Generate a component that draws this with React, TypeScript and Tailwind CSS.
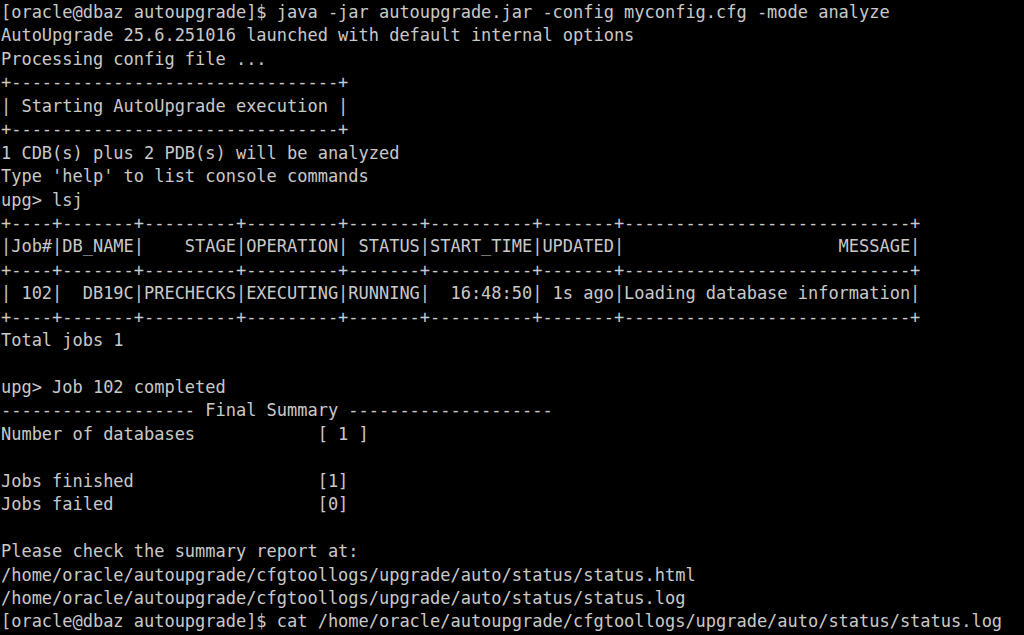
import React from 'react'

const lines: string[] = [
    '[oracle@dbaz autoupgrade]$ java -jar autoupgrade.jar -config myconfig.cfg -mode analyze',
    'AutoUpgrade 25.6.251016 launched with default internal options',
    'Processing config file ...',
    '+--------------------------------+',
    '| Starting AutoUpgrade execution |',
    '+--------------------------------+',
    '1 CDB(s) plus 2 PDB(s) will be analyzed',
    "Type 'help' to list console commands",
    'upg> lsj',
    '+----+-------+---------+---------+-------+----------+-------+----------------------------+',
    '|Job#|DB_NAME|    STAGE|OPERATION| STATUS|START_TIME|UPDATED|                     MESSAGE|',
    '+----+-------+---------+---------+-------+----------+-------+----------------------------+',
    '| 102|  DB19C|PRECHECKS|EXECUTING|RUNNING|  16:48:50| 1s ago|Loading database information|',
    '+----+-------+---------+---------+-------+----------+-------+----------------------------+',
    'Total jobs 1',
    '',
    'upg> Job 102 completed',
    '------------------- Final Summary --------------------',
    'Number of databases            [ 1 ]',
    '',
    'Jobs finished                  [1]',
    'Jobs failed                    [0]',
    '',
    'Please check the summary report at:',
    '/home/oracle/autoupgrade/cfgtoollogs/upgrade/auto/status/status.html',
    '/home/oracle/autoupgrade/cfgtoollogs/upgrade/auto/status/status.log',
    '[oracle@dbaz autoupgrade]$ cat /home/oracle/autoupgrade/cfgtoollogs/upgrade/auto/status/status.log',
]

export default function App() {
    return (
        <div className="w-[1024px] h-[635px] overflow-hidden bg-black pt-[1px] pl-[1px] text-[#c9c9c9] font-['DejaVu_Sans_Mono',monospace] text-[17px] tracking-[-0.02px] leading-[23.45px]">
            {lines.map((line, i) => (
                <div key={i} className="whitespace-pre h-[23.45px]">
                    {line}
                </div>
            ))}
        </div>
    )
}
